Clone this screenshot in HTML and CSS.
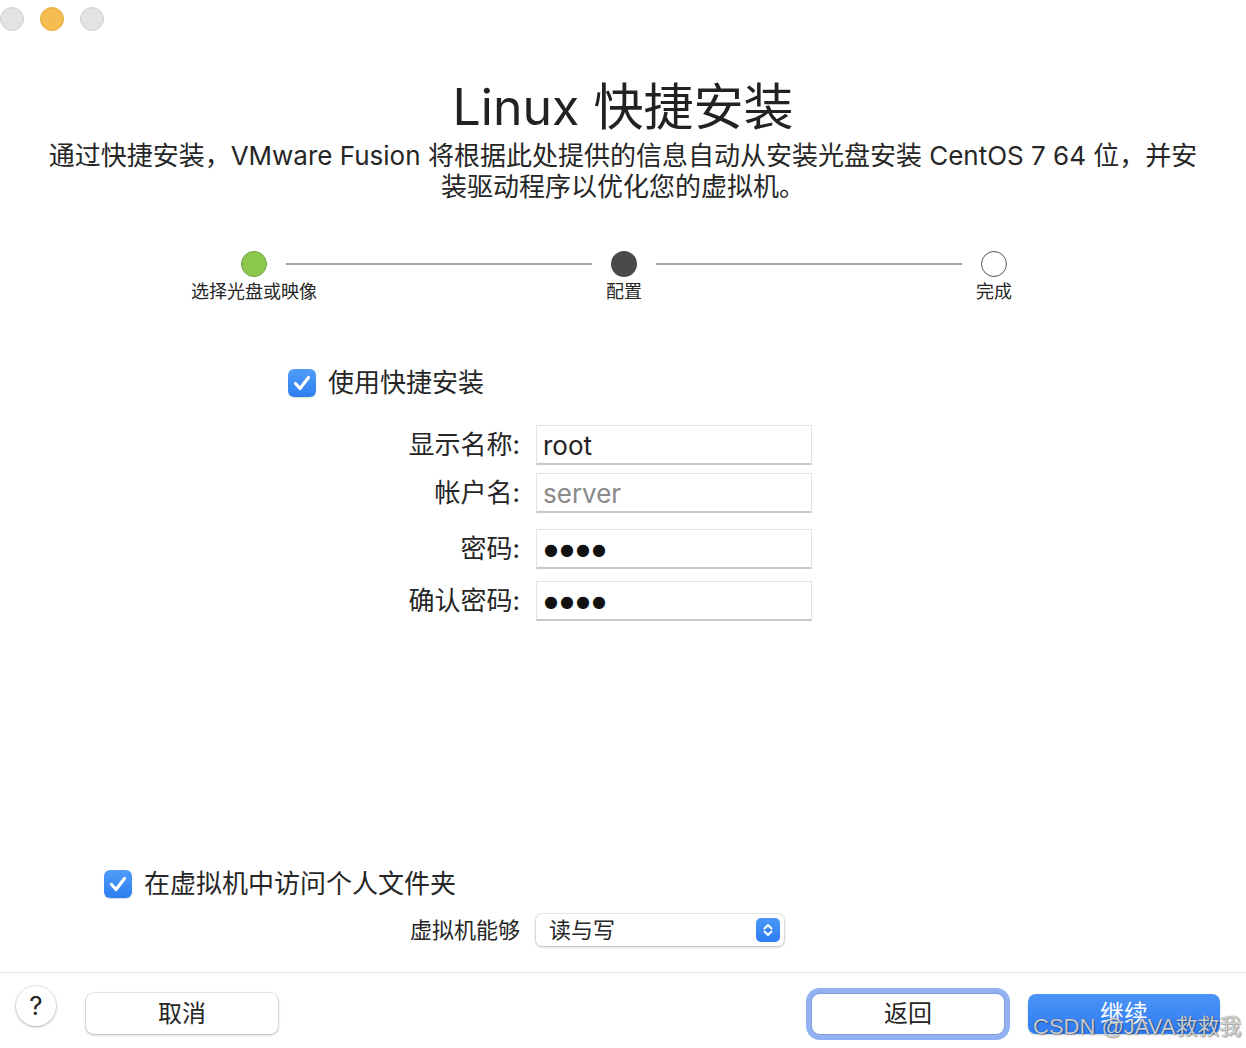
FILE: index.html
```html
<!DOCTYPE html>
<html lang="zh-CN">
<head>
<meta charset="utf-8">
<title>Linux 快捷安装</title>
<link rel="stylesheet" href="styles.css">
</head>
<body>
<div class="window">
  <div class="titlebar">
    <span class="light light-gray"></span>
    <span class="light light-yellow"></span>
    <span class="light light-gray"></span>
  </div>

  <h1 class="title">Linux 快捷安装</h1>
  <p class="subtitle">
    <span class="line">通过快捷安装，VMware Fusion 将根据此处提供的信息自动从安装光盘安装 CentOS 7 64 位，并安</span>
    <span class="line">装驱动程序以优化您的虚拟机。</span>
  </p>

  <div class="stepper">
    <div class="step">
      <span class="dot dot-done"></span>
      <span class="step-label">选择光盘或映像</span>
    </div>
    <div class="step-line"></div>
    <div class="step">
      <span class="dot dot-current"></span>
      <span class="step-label">配置</span>
    </div>
    <div class="step-line"></div>
    <div class="step">
      <span class="dot dot-todo"></span>
      <span class="step-label">完成</span>
    </div>
  </div>

  <label class="check-row quick">
    <span class="checkbox"><svg viewBox="0 0 28 28" width="28" height="28"><path d="M7.5 14.5l4.5 5L20.5 8.5" fill="none" stroke="#fff" stroke-width="3.2" stroke-linecap="round" stroke-linejoin="round"/></svg></span>
    <span class="check-text">使用快捷安装</span>
  </label>

  <div class="form">
    <div class="form-row row-1">
      <span class="form-label">显示名称:</span>
      <div class="field">root</div>
    </div>
    <div class="form-row row-2">
      <span class="form-label">帐户名:</span>
      <div class="field placeholder">server</div>
    </div>
    <div class="form-row row-3">
      <span class="form-label">密码:</span>
      <div class="field secret">●●●●</div>
    </div>
    <div class="form-row row-4">
      <span class="form-label">确认密码:</span>
      <div class="field secret">●●●●</div>
    </div>
  </div>

  <div class="share">
    <label class="check-row share-check">
      <span class="checkbox"><svg viewBox="0 0 28 28" width="28" height="28"><path d="M7.5 14.5l4.5 5L20.5 8.5" fill="none" stroke="#fff" stroke-width="3.2" stroke-linecap="round" stroke-linejoin="round"/></svg></span>
      <span class="check-text">在虚拟机中访问个人文件夹</span>
    </label>
    <div class="select-row">
      <span class="select-label">虚拟机能够</span>
      <div class="select">
        <span class="select-value">读与写</span>
        <span class="select-arrows"><svg viewBox="0 0 24 24" width="24" height="24"><path d="M8.5 10.5L12 7l3.5 3.5M8.5 13.5L12 17l3.5-3.5" fill="none" stroke="#fff" stroke-width="2" stroke-linecap="round" stroke-linejoin="round"/></svg></span>
      </div>
    </div>
  </div>

  <div class="footer">
    <button class="help">?</button>
    <button class="btn btn-cancel">取消</button>
    <div class="footer-spacer"></div>
    <button class="btn btn-back">返回</button>
    <button class="btn btn-primary">继续</button>
  </div>

  <div class="watermark">CSDN @JAVA救救我</div>
</div>
</body>
</html>
```

FILE: styles.css
```css
* { box-sizing: border-box; }

html, body {
  margin: 0;
  padding: 0;
  background: #ffffff;
}

body {
  font-family: "Inter", "Noto Sans CJK SC", sans-serif;
  color: #262626;
}

.window {
  position: relative;
  width: 1246px;
  height: 1048px;
  display: flex;
  flex-direction: column;
  overflow: hidden;
}

/* traffic lights */
.titlebar {
  height: 38px;
  padding-top: 7px;
  display: flex;
  gap: 16px;
}
.light {
  width: 24px;
  height: 24px;
  border-radius: 50%;
}
.light-gray {
  background: #e3e3e3;
  border: 1px solid #cfcfcf;
}
.light-yellow {
  background: #f5bd4f;
  border: 1px solid #e2a93d;
}

/* headings */
.title {
  margin: 41px 0 0;
  font-size: 50px;
  line-height: 56px;
  font-weight: 400;
  text-align: center;
  color: #222;
}
.subtitle {
  margin: 5px 0 0;
  font-size: 26px;
  line-height: 31px;
  text-align: center;
  color: #262626;
}
.subtitle .line {
  display: block;
  white-space: nowrap;
}

/* stepper */
.stepper {
  margin: 49px 0 0 222px;
  width: 804px;
  display: flex;
  align-items: flex-start;
}
.step {
  width: 64px;
  display: flex;
  flex-direction: column;
  align-items: center;
}
.dot {
  width: 26px;
  height: 26px;
  border-radius: 50%;
}
.dot-done {
  background: #8cc84b;
  border: 1px solid #6f9f3c;
}
.dot-current {
  background: #4a4a4a;
}
.dot-todo {
  background: #fff;
  border: 1px solid #555;
}
.step-label {
  margin-top: 4px;
  font-size: 18px;
  line-height: 22px;
  white-space: nowrap;
  color: #262626;
}
.step-line {
  flex: 1;
  height: 2px;
  margin-top: 12px;
  background: #a8a8a8;
}

/* checkbox rows */
.check-row {
  display: flex;
  align-items: center;
  gap: 12px;
  height: 28px;
}
.checkbox {
  width: 28px;
  height: 28px;
  border-radius: 6px;
  background: linear-gradient(#4f9df8, #2e7ef1);
  box-shadow: 0 1px 1px rgba(0,0,0,0.15);
  display: flex;
}
.check-text {
  font-size: 26px;
  line-height: 28px;
  color: #262626;
}
.quick {
  margin: 66px 0 0 288px;
}

/* form */
.form {
  margin-top: 28px;
  display: flex;
  flex-direction: column;
}
.form-row {
  display: grid;
  grid-template-columns: 520px 276px;
  column-gap: 16px;
  align-items: center;
  height: 40px;
}
.row-2 { margin-top: 8px; }
.row-3 { margin-top: 16px; }
.row-4 { margin-top: 12px; }
.form-label {
  text-align: right;
  font-size: 26px;
  line-height: 40px;
  color: #262626;
}
.field {
  height: 40px;
  border: 1px solid #e2e2e2;
  border-bottom: 2px solid #c8c8c8;
  background: #fff;
  padding: 1px 6px 0;
  font-size: 26px;
  line-height: 38px;
  color: #222;
}
.placeholder {
  color: #8a8a8a;
}
.secret {
  font-family: "DejaVu Sans", sans-serif;
  font-size: 16px;
  letter-spacing: 2px;
  padding-left: 7px;
  color: #111;
}

/* shared folder */
.share {
  margin-top: auto;
  padding-bottom: 26px;
}
.share-check {
  margin-left: 104px;
}
.select-row {
  margin-top: 16px;
  display: grid;
  grid-template-columns: 520px 248px;
  column-gap: 16px;
  align-items: center;
  height: 32px;
}
.select-label {
  text-align: right;
  font-size: 22px;
  line-height: 32px;
  color: #262626;
}
.select {
  height: 32px;
  border-radius: 6px;
  background: #fff;
  box-shadow: 0 0 0 1px rgba(0,0,0,0.08), 0 1px 3px rgba(0,0,0,0.22);
  display: flex;
  align-items: center;
  justify-content: space-between;
  padding: 0 4px 0 13px;
}
.select-value {
  font-size: 22px;
  line-height: 32px;
  color: #262626;
}
.select-arrows {
  width: 24px;
  height: 24px;
  border-radius: 5px;
  background: linear-gradient(#4a98f8, #2f7cf2);
  display: flex;
}

/* footer */
.footer {
  height: 76px;
  border-top: 1px solid #e4e4e4;
  display: flex;
  align-items: flex-start;
  padding: 0 26px 0 16px;
}
.help {
  margin-top: 13px;
  width: 40px;
  height: 40px;
  border-radius: 50%;
  border: none;
  background: #fff;
  box-shadow: 0 0 0 1px rgba(0,0,0,0.08), 0 1px 3px rgba(0,0,0,0.25);
  font-family: "Inter", "Noto Sans CJK SC", sans-serif;
  font-size: 26px;
  line-height: 40px;
  padding: 0;
  color: #222;
}
.btn {
  width: 192px;
  height: 41px;
  border-radius: 8px;
  border: none;
  padding: 0;
  font-family: "Inter", "Noto Sans CJK SC", sans-serif;
  font-size: 24px;
  line-height: 40px;
  color: #262626;
  background: #fff;
}
.btn-cancel {
  margin: 20px 0 0 30px;
  box-shadow: 0 0 0 1px rgba(0,0,0,0.08), 0 1px 3px rgba(0,0,0,0.25);
}
.footer-spacer {
  flex: 1;
}
.btn-back {
  margin-top: 21px;
  height: 40px;
  box-shadow: 0 0 0 1px rgba(0,0,0,0.1), 0 0 0 6px rgba(98,144,238,0.7);
}
.btn-primary {
  margin: 21px 0 0 24px;
  height: 40px;
  color: #fff;
  background: linear-gradient(#4b94f6, #2f7bf4);
  box-shadow: 0 1px 2px rgba(0,0,0,0.2);
}

/* watermark overlay */
.watermark {
  position: absolute;
  left: 1033px;
  top: 1012px;
  font-family: "Liberation Sans", "Noto Sans CJK SC", sans-serif;
  font-size: 22px;
  line-height: 30px;
  white-space: nowrap;
  color: rgba(225,225,225,0.9);
  text-shadow: 0 0 1px rgba(0,0,0,0.6), 1px 1px 1px rgba(0,0,0,0.3);
}
```
